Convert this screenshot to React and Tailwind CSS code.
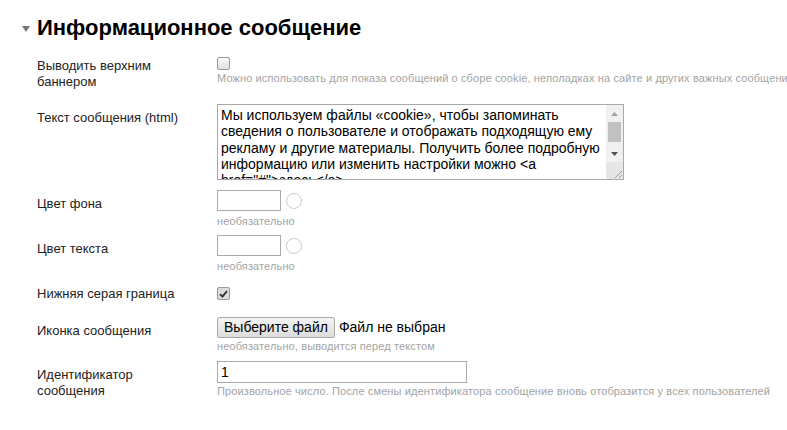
import React from 'react';

const Label = ({ children, className = '' }) => (
  <div className={`w-[160px] mr-[20px] shrink-0 text-[13px] leading-[16px] text-[#222] ${className}`}>
    {children}
  </div>
);

const Hint = ({ children, className = '' }) => (
  <div className={`text-[11px] leading-[14px] tracking-[0.12px] text-[#a3a3a3] whitespace-nowrap ${className}`}>{children}</div>
);

const Checkbox = ({ checked }) => (
  <div
    className={`w-[13px] h-[13px] rounded-[2px] border border-[#9a9a9a] flex items-center justify-center ${
      checked ? 'bg-[#dcdcdc]' : 'bg-gradient-to-b from-[#fbfbfb] to-[#dedede]'
    }`}
  >
    {checked && (
      <svg width="9" height="8" viewBox="0 0 9 8">
        <path d="M1 4.2 L3.4 6.6 L8 1.2" fill="none" stroke="#333" strokeWidth="1.9" />
      </svg>
    )}
  </div>
);

const ColorField = ({ className = '' }) => (
  <div className={className}>
    <div className="flex items-center gap-[5px]">
      <div className="w-[64px] h-[21px] border border-[#aaa] bg-white" />
      <div className="w-[16px] h-[16px] rounded-full border border-[#ccc] bg-white" />
    </div>
    <Hint className="mt-[3px]">необязательно</Hint>
  </div>
);

const lines = [
  'Мы используем файлы «cookie», чтобы запоминать',
  'сведения о пользователе и отображать подходящую ему',
  'рекламу и другие материалы. Получить более подробную',
  'информацию или изменить настройки можно <a',
  'href="#">здесь</a>.',
];

const FakeTextarea = () => (
  <div className="flex w-[407px] h-[76px] border border-[#a9a9a9] bg-white">
    <div className="flex-1 overflow-hidden pl-[3px] pt-[2px] text-[14px] leading-[16.3px] text-black">
      {lines.map((l) => (
        <div key={l} className="whitespace-nowrap">{l}</div>
      ))}
    </div>
    {/* scrollbar */}
    <div className="w-[17px] flex flex-col bg-[#f1f1f1]">
      <div className="h-[17px] flex items-center justify-center">
        <svg width="7" height="4" viewBox="0 0 7 4"><path d="M0 4 L3.5 0 L7 4 Z" fill="#a3a3a3" /></svg>
      </div>
      <div className="h-[23px] px-[2px]">
        <div className="h-[20px] bg-[#c1c1c1]" />
      </div>
      <div className="h-[17px] flex items-center justify-center">
        <svg width="7" height="4" viewBox="0 0 7 4"><path d="M0 0 L3.5 4 L7 0 Z" fill="#505050" /></svg>
      </div>
      <div className="h-[17px] bg-[#e6e6e6] flex items-end justify-end">
        <svg width="10" height="10" viewBox="0 0 10 10">
          <path d="M9 2 L2 9 M9 6 L6 9" stroke="#9a9a9a" strokeWidth="1" />
        </svg>
      </div>
    </div>
  </div>
);

export default function App() {
  return (
    <div className="w-[787px] h-[430px] bg-white font-['Liberation_Sans',Arial,sans-serif] overflow-hidden">
      {/* Header */}
      <div className="flex items-center pt-[15px] pl-[22px]">
        <svg width="8" height="6" viewBox="0 0 8 6" className="mr-[7px] mt-[1px]">
          <path d="M0 0 L8 0 L4 6 Z" fill="#777" />
        </svg>
        <h2 className="text-[22px] leading-[26px] font-bold text-black">Информационное сообщение</h2>
      </div>

      <div className="pl-[37px]">
        {/* Banner */}
        <div className="flex mt-[16px]">
          <Label className="pt-[1px]">Выводить верхним баннером</Label>
          <div>
            <Checkbox />
            <Hint className="mt-[1px]">
              Можно использовать для показа сообщений о сборе cookie, неполадках на сайте и других важных сообщениях
            </Hint>
          </div>
        </div>

        {/* Text */}
        <div className="flex mt-[14px]">
          <Label className="pt-[6px]">Текст сообщения (html)</Label>
          <FakeTextarea />
        </div>

        {/* Background colour */}
        <div className="flex mt-[10px]">
          <Label className="pt-[6px]">Цвет фона</Label>
          <ColorField />
        </div>

        {/* Text colour */}
        <div className="flex mt-[7px]">
          <Label className="pt-[6px]">Цвет текста</Label>
          <ColorField />
        </div>

        {/* Bottom border */}
        <div className="flex mt-[13px]">
          <Label>Нижняя серая граница</Label>
          <div className="pt-[1px]">
            <Checkbox checked />
          </div>
        </div>

        {/* Icon */}
        <div className="flex mt-[15px]">
          <Label className="pt-[6px]">Иконка сообщения</Label>
          <div>
            <div className="flex items-center">
              <button className="h-[21px] px-[6px] border border-[#a9a9a9] rounded-[2px] bg-gradient-to-b from-[#f4f4f4] to-[#dcdcdc] text-[14px] leading-[19px] text-black">
                Выберите файл
              </button>
              <span className="ml-[4px] text-[14px] text-black">Файл не выбран</span>
            </div>
            <Hint className="mt-[1px]">необязательно, выводится перед текстом</Hint>
          </div>
        </div>

        {/* ID */}
        <div className="flex mt-[8px]">
          <Label className="pt-[6px]">Идентификатор сообщения</Label>
          <div>
            <div className="w-[250px] h-[22px] border border-[#aaa] bg-white pl-[3px] text-[14px] leading-[20px] text-black">
              1
            </div>
            <Hint className="mt-[1px]">
              Произвольное число. После смены идентификатора сообщение вновь отобразится у всех пользователей
            </Hint>
          </div>
        </div>
      </div>
    </div>
  );
}
